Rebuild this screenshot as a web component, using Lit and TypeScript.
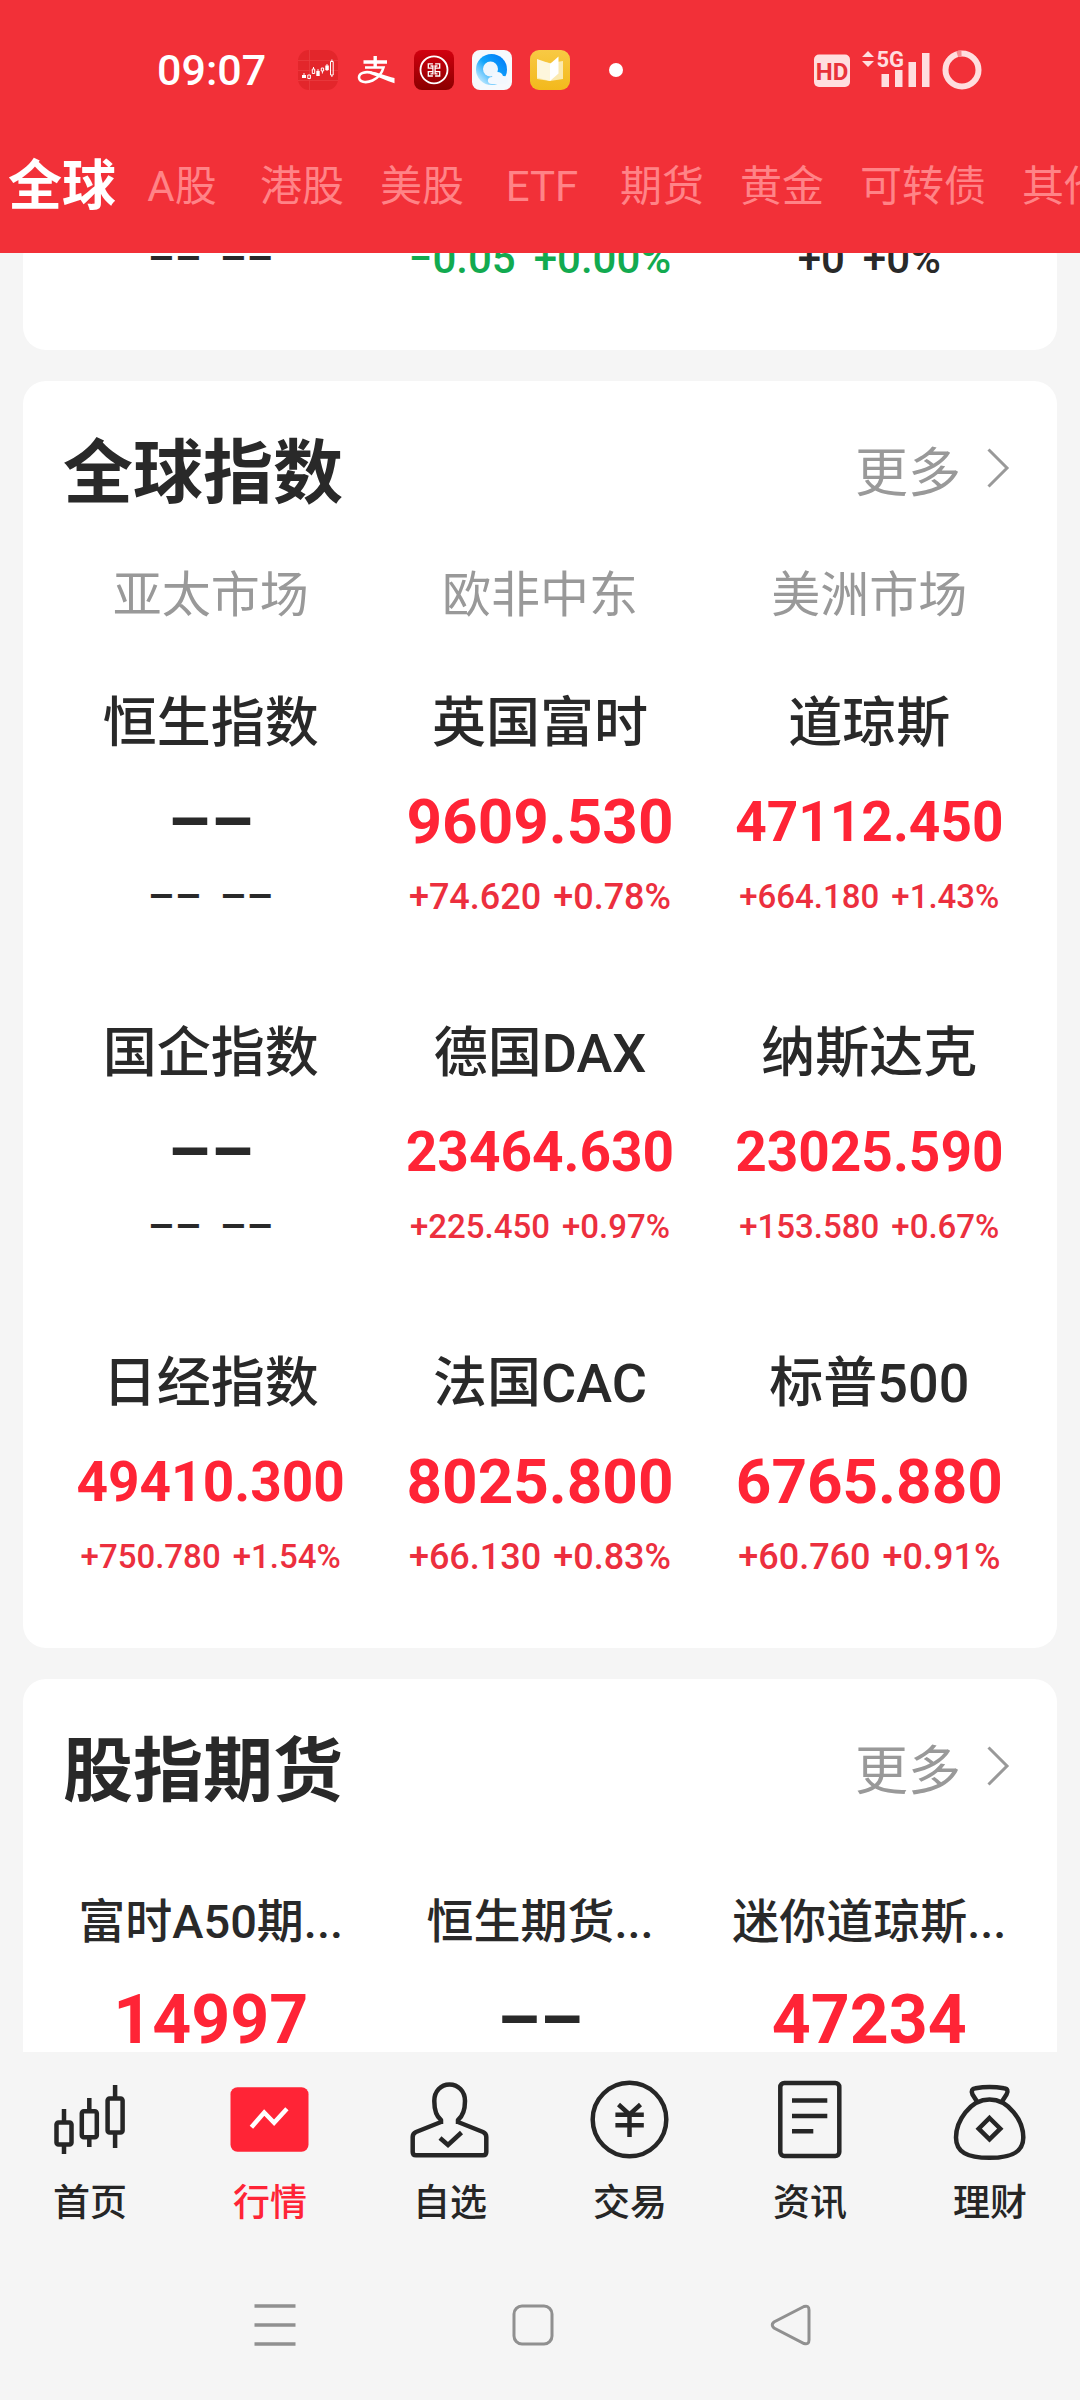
import { LitElement, html, css, svg, nothing } from "lit";
import { customElement, property, state } from "lit/decorators.js";
import { classMap } from "lit/directives/class-map.js";

interface Quote {
  name?: string;
  value?: string;
  change: string;
  tone: "up" | "down" | "flat";
}

const TABS = ["全球", "A股", "港股", "美股", "ETF", "期货", "黄金", "可转债", "其他"];

const MARKETS = ["亚太市场", "欧非中东", "美洲市场"];

const PREVIOUS: Quote[] = [
  { change: "–– ––", tone: "flat" },
  { change: "−0.05 +0.00%", tone: "down" },
  { change: "+0 +0%", tone: "flat" },
];

const INDICES: Quote[][] = [
  [
    { name: "恒生指数", value: "––", change: "–– ––", tone: "flat" },
    { name: "英国富时", value: "9609.530", change: "+74.620 +0.78%", tone: "up" },
    { name: "道琼斯", value: "47112.450", change: "+664.180 +1.43%", tone: "up" },
  ],
  [
    { name: "国企指数", value: "––", change: "–– ––", tone: "flat" },
    { name: "德国DAX", value: "23464.630", change: "+225.450 +0.97%", tone: "up" },
    { name: "纳斯达克", value: "23025.590", change: "+153.580 +0.67%", tone: "up" },
  ],
  [
    { name: "日经指数", value: "49410.300", change: "+750.780 +1.54%", tone: "up" },
    { name: "法国CAC", value: "8025.800", change: "+66.130 +0.83%", tone: "up" },
    { name: "标普500", value: "6765.880", change: "+60.760 +0.91%", tone: "up" },
  ],
];

const FUTURES: Quote[] = [
  { name: "富时A50期...", value: "14997", change: "", tone: "up" },
  { name: "恒生期货...", value: "––", change: "", tone: "flat" },
  { name: "迷你道琼斯...", value: "47234", change: "", tone: "up" },
];

const NAV_ICONS: Record<string, unknown> = {
  首页: svg`
    <g fill="none" stroke="currentColor" stroke-width="4.5">
      <rect x="6.5" y="43.5" width="15" height="22" rx="2"/>
      <path d="M14 30V43M14 66V75"/>
      <rect x="31.8" y="32.2" width="15" height="26" rx="2"/>
      <path d="M39.3 19V32M39.3 58V68"/>
      <rect x="57.6" y="19.5" width="15" height="34" rx="2"/>
      <path d="M65.1 6V19M65.1 54V69"/>
    </g>`,
  行情: svg`
    <rect x="0.5" y="8.3" width="78" height="64.4" rx="7" fill="currentColor"/>
    <path d="M21.4 48.3L34.2 33.5L44.1 43.8L56.9 29.7" fill="none" stroke="#fff" stroke-width="4.5"/>`,
  自选: svg`
    <g fill="none" stroke="currentColor" stroke-width="4.5" stroke-linejoin="round">
      <path d="M31 45V41C26 37 24.3 31 24.3 22C24.3 12 31 5.5 39.5 5.5C48 5.5 55 12 55 22C55 31 53 37 48 41V45"/>
      <path d="M31 43L6 53Q2.7 54.5 2.7 58V73Q2.7 76.3 6 76.3H73Q76.3 76.3 76.3 73V58Q76.3 54.5 73 53L48 43"/>
      <path d="M30 59L38 66L51.5 53.5" stroke-linejoin="miter"/>
    </g>`,
  交易: svg`
    <g fill="none" stroke="currentColor" stroke-width="4.5">
      <circle cx="39.5" cy="40.5" r="36.8"/>
      <path d="M28.5 25.5L39.5 35.5L50.5 25.5M25.4 35.7H53.8M25.4 46.2H53.8M39.5 35V58"/>
    </g>`,
  资讯: svg`
    <g fill="none" stroke="currentColor" stroke-width="4.5">
      <rect x="10.3" y="4" width="59" height="73" rx="4"/>
      <path d="M22 21.5H57.3M22 37H57.3M22 52.3H43.3"/>
    </g>`,
  理财: svg`
    <g fill="none" stroke="currentColor" stroke-width="4.5" stroke-linejoin="round">
      <path d="M39.5 20.5C20 20.5 6 42 6 58.5C6 73 17 78.8 39.5 78.8C62 78.8 73.3 73 73.3 58.5C73.3 42 59 20.5 39.5 20.5Z"/>
      <path d="M27 22.5L22.5 15.5C21 11.5 22 9.8 25.5 9.3Q39.5 6.8 54 9.3C57.5 9.8 58.5 11.5 56.5 15.5L52 22.5"/>
      <path d="M39.5 39L50.3 49.7L39.5 60.4L28.7 49.7Z" stroke-linejoin="miter"/>
    </g>`,
};

const FONT = css`"Roboto", "Noto Sans CJK SC", sans-serif`;

@customElement("quote-cell")
export class QuoteCell extends LitElement {
  @property({ attribute: false }) quote!: Quote;
  @property({ type: Boolean }) compact = false;

  static styles = css`
    :host {
      display: block;
      font-family: ${FONT};
      text-align: center;
      white-space: nowrap;
      color: #292929;
    }
    .name {
      font-size: 54px;
      font-weight: 500;
      line-height: 96px;
    }
    .name.compact {
      font-size: 47px;
    }
    .value {
      font-size: 62px;
      font-weight: 700;
      line-height: 100px;
    }
    .value.short {
      font-size: 68px;
    }
    .value.long {
      font-size: 55px;
    }
    .change {
      display: flex;
      justify-content: center;
      gap: 12px;
      font-size: 36px;
      font-weight: 500;
      line-height: 50px;
    }
    .change.short {
      gap: 18px;
      font-size: 42px;
    }
    .change.long {
      font-size: 33px;
    }
    .up {
      color: #ff2436;
    }
    .change.up {
      color: #ec2f3e;
    }
    .down {
      color: #12aa50;
    }
  `;

  render() {
    const { name, value, change, tone } = this.quote;
    return html`
      ${name ? html`<div class=${classMap({ name: true, compact: this.compact })}>${name}</div>` : nothing}
      ${value
        ? html`<div class=${classMap({ value: true, [tone]: true, short: value.length < 7, long: value.length > 8 })}>${value}</div>`
        : nothing}
      ${change
        ? html`<div class=${classMap({ change: true, [tone]: true, short: change.length < 13, long: change.length > 14 })}>
            ${change.split(" ").map((part) => html`<span>${part}</span> `)}
          </div>`
        : nothing}
    `;
  }
}

@customElement("status-bar")
export class StatusBar extends LitElement {
  static styles = css`
    :host {
      display: flex;
      align-items: center;
      height: 140px;
      padding: 0 98px 0 157px;
      font-family: ${FONT};
      color: #fff;
    }
    .time {
      font-size: 43px;
      font-weight: 500;
      line-height: 50px;
      margin-right: 32px;
    }
    .apps {
      display: flex;
      align-items: center;
      gap: 18px;
    }
    .dot {
      width: 14px;
      height: 14px;
      border-radius: 50%;
      background: #fff;
      margin-left: 39px;
    }
    .signals {
      display: flex;
      align-items: center;
      gap: 12px;
      margin-left: auto;
    }
    svg {
      display: block;
      overflow: visible;
    }
    text {
      font-family: "Roboto", sans-serif;
      font-weight: 700;
    }
  `;

  render() {
    return html`
      <span class="time">09:07</span>
      <div class="apps">
        <svg width="40" height="40" viewBox="0 0 40 40" aria-hidden="true">
          <rect width="40" height="40" rx="11" fill="#e3262b"/>
          <path d="M0 10.5H40M0 20.5H40M0 30.5H40M11.5 0V40" stroke="#ea3c40" stroke-width="0.8"/>
          <path d="M4 25H8V28H4ZM18.3 21H21.7V26H18.3ZM27.3 15.5H30.8V20H27.3Z" fill="#fff"/>
          <path d="M6 23V28M20 19V26M29 14V21" stroke="#fff" stroke-width="0.9"/>
          <path d="M9.8 25H12.4V28.5H9.8ZM14.3 19H16.7V23.5H14.3ZM23.3 18H25.6V21H23.3ZM32.5 11.5H35.2V25H32.5ZM33.9 9.5V11.5M33.9 25V27M15.5 17V19M24.4 21V23.5" fill="none" stroke="#fff" stroke-width="1"/>
        </svg>
        <svg width="40" height="40" viewBox="0 0 40 40" aria-hidden="true">
          <g fill="none" stroke="#fff">
            <path d="M7.5 12H31M19.2 6V17" stroke-width="3.4"/>
            <path d="M9 17.5H27.5C26 23 22 28 16.500 30.5C9.5 33.5 3 32 3 27.3C3 22.5 10 21.2 16 22.8" stroke-width="2.6"/>
          </g>
          <path d="M14 21.2C21 22 30 26 38.5 28V33.3C31 31 22 26.5 14 24Z" fill="#fff"/>
        </svg>
        <svg width="40" height="40" viewBox="0 0 40 40" aria-hidden="true">
          <defs>
            <linearGradient id="bank" x1="0" y1="0" x2="0" y2="1">
              <stop offset="0" stop-color="#d2000f"/>
              <stop offset="1" stop-color="#8a0000"/>
            </linearGradient>
          </defs>
          <rect width="40" height="40" rx="8" fill="url(#bank)"/>
          <circle cx="20" cy="19.8" r="13.5" fill="none" stroke="#fff" stroke-width="1.8"/>
          <path d="M18.9 13.9H14.3V18.2H18.9V21.7H14.3V26H18.9M21.1 13.9H25.7V18.2H21.1V21.7H25.7V26H21.1M16.5 16H18.9V18.2M23.500 16H21.1V18.2M16.5 23.8H18.9V21.7M23.5 23.8H21.1V21.7" fill="none" stroke="#fff" stroke-width="1.3"/>
        </svg>
        <svg width="40" height="40" viewBox="0 0 40 40" aria-hidden="true">
          <defs>
            <linearGradient id="ring" x1="1" y1="0.2" x2="0.2" y2="1">
              <stop offset="0" stop-color="#007cf8"/>
              <stop offset="0.5" stop-color="#12a5fb"/>
              <stop offset="1" stop-color="#c9ecff"/>
            </linearGradient>
          </defs>
          <rect width="40" height="40" rx="8" fill="#f6f9fd"/>
          <circle cx="19.5" cy="19.5" r="15.5" fill="url(#ring)"/>
          <circle cx="18.5" cy="19" r="7.5" fill="#eef6fd"/>
          <path d="M20 34C14.5 34 14.5 27 20 27C21 20.5 29.5 20.5 31 26C37 25.5 38 34 32.5 34Z" fill="#f3f8fe"/>
        </svg>
        <svg width="40" height="40" viewBox="0 0 40 40" aria-hidden="true">
          <defs>
            <linearGradient id="book" x1="0" y1="0" x2="0" y2="1">
              <stop offset="0" stop-color="#f8c944"/>
              <stop offset="1" stop-color="#f3b91c"/>
            </linearGradient>
          </defs>
          <rect width="40" height="40" rx="9" fill="url(#book)"/>
          <path d="M7 11L20 13L33 11V29L20 31L7 29Z" fill="#fbe9b0"/>
          <path d="M7 9L20 13.5V31L7 27.5Z" fill="#fdf6dc"/>
          <path d="M20 14L28.5 6.5V23.5L20 31Z" fill="#fff"/>
        </svg>
      </div>
      <span class="dot"></span>
      <div class="signals">
        <svg width="36" height="40" viewBox="0 0 36 40" role="img" aria-label="HD">
          <rect y="4.5" width="36" height="32.5" rx="5" fill="#ffdedf"/>
          <text x="18" y="29.5" font-size="24" text-anchor="middle" fill="#e8323a">HD</text>
        </svg>
        <svg width="68" height="40" viewBox="0 0 68 40" role="img" aria-label="5G">
          <path d="M0 7L6 1L12 7ZM0 11H12L6 17Z" fill="#ffdedf"/>
          <text x="14.5" y="17" font-size="22" fill="#ffdedf">5G</text>
          <path d="M19.5 24H27V37H19.5ZM33 20H40.5V37H33ZM46.5 12H54V37H46.5ZM60 3H67.5V37H60Z" fill="#ffdedf"/>
        </svg>
        <svg width="40" height="40" viewBox="0 0 40 40" role="img" aria-label="电量">
          <circle cx="20" cy="20" r="16.5" fill="none" stroke="#ffdedf" stroke-width="6"/>
          <path d="M15.2 4.2A16.5 16.5 0 0 1 19.5 3.5" fill="none" stroke="#f78c90" stroke-width="6"/>
        </svg>
      </div>
    `;
  }
}

@customElement("app-root")
export class AppRoot extends LitElement {
  @state() private tab = "全球";
  @state() private section = "行情";

  static styles = css`
    :host {
      display: flex;
      flex-direction: column;
      height: 100vh;
      overflow: hidden;
      background: #f5f5f5;
      font-family: ${FONT};
      color: #292929;
    }
    button {
      border: 0;
      padding: 0;
      background: none;
      color: inherit;
      font: inherit;
      cursor: pointer;
    }
    .top {
      flex: none;
      background: #f23038;
    }
    .tabs {
      display: flex;
      align-items: center;
      gap: 36px;
      height: 93px;
      padding: 0 0 20px 20px;
      overflow: hidden;
    }
    .tab {
      flex: none;
      display: flex;
      justify-content: center;
      min-width: 84px;
      font-size: 42px;
      line-height: 60px;
      white-space: nowrap;
      color: #ff8387;
    }
    .tab.active {
      width: 84px;
      font-size: 54px;
      font-weight: 700;
      color: #fff;
    }
    main {
      flex: 1;
      min-height: 0;
      overflow: hidden;
      padding: 0 23px;
    }
    .card {
      background: #fff;
      border-radius: 23px;
      padding: 43px 23px 66px;
      margin-bottom: 31px;
    }
    .card.scrolled {
      margin-top: -19px;
      padding-top: 0;
    }
    .head {
      display: flex;
      align-items: center;
      justify-content: space-between;
      padding: 0 25px 0 17px;
    }
    h2 {
      margin: 0;
      font-size: 70px;
      font-weight: 700;
      line-height: 100px;
    }
    .more {
      display: flex;
      align-items: center;
      gap: 26px;
      font-size: 53px;
      line-height: 80px;
      color: #999;
      text-decoration: none;
    }
    .more svg {
      margin-bottom: 12px;
    }
    .row {
      display: grid;
      grid-template-columns: repeat(3, minmax(0, 1fr));
    }
    .futures {
      margin-top: 52px;
    }
    table {
      width: 100%;
      table-layout: fixed;
      border-collapse: collapse;
      margin-top: 42px;
    }
    th {
      padding: 0 0 50px;
      font-size: 49px;
      font-weight: 400;
      line-height: 60px;
      color: #999;
    }
    td {
      padding: 0 0 84px;
    }
    tr:last-child td {
      padding-bottom: 0;
    }
    .bottom {
      flex: none;
      background: #f5f5f5;
    }
    .nav {
      display: grid;
      grid-template-columns: repeat(6, minmax(0, 1fr));
      padding: 27px 0 47px;
    }
    .item {
      display: flex;
      flex-direction: column;
      align-items: center;
      gap: 20px;
      font-size: 37px;
      font-weight: 500;
      line-height: 50px;
      color: #262626;
    }
    .item.active {
      color: #ff2436;
    }
    .system {
      display: flex;
      justify-content: center;
      gap: 216px;
      padding: 28px 14px 54px 0;
    }
    svg {
      display: block;
      overflow: visible;
    }
  `;

  private heading(title: string) {
    return html`
      <div class="head">
        <h2>${title}</h2>
        <a class="more" href="#more">
          更多
          <svg width="22" height="40" viewBox="0 0 22 40" aria-hidden="true">
            <path d="M1.5 1.5L20 20L1.5 38.5" fill="none" stroke="#999" stroke-width="3"/>
          </svg>
        </a>
      </div>
    `;
  }

  render() {
    return html`
      <header class="top">
        <status-bar></status-bar>
        <nav class="tabs">
          ${TABS.map(
            (t) => html`<button class=${classMap({ tab: true, active: t === this.tab })} @click=${() => (this.tab = t)}>${t}</button>`
          )}
        </nav>
      </header>
      <main>
        <section class="card scrolled">
          <div class="row">${PREVIOUS.map((q) => html`<quote-cell .quote=${q}></quote-cell>`)}</div>
        </section>
        <section class="card">
          ${this.heading("全球指数")}
          <table>
            <thead>
              <tr>${MARKETS.map((m) => html`<th scope="col">${m}</th>`)}</tr>
            </thead>
            <tbody>
              ${INDICES.map(
                (row) => html`<tr>${row.map((q) => html`<td><quote-cell .quote=${q}></quote-cell></td>`)}</tr>`
              )}
            </tbody>
          </table>
        </section>
        <section class="card">
          ${this.heading("股指期货")}
          <div class="row futures">
            ${FUTURES.map((q) => html`<quote-cell .quote=${q} compact></quote-cell>`)}
          </div>
        </section>
      </main>
      <footer class="bottom">
        <nav class="nav">
          ${Object.entries(NAV_ICONS).map(
            ([label, icon]) => html`
              <button class=${classMap({ item: true, active: label === this.section })} @click=${() => (this.section = label)}>
                <svg width="80" height="80" viewBox="0 0 80 80" aria-hidden="true">${icon}</svg>
                <span>${label}</span>
              </button>
            `
          )}
        </nav>
        <div class="system">
          <button aria-label="最近任务">
            <svg width="42" height="42" viewBox="0 0 42 42">
              <path d="M0.5 2H41.5M0.5 21H41.5M0.5 40H41.5" stroke="#909090" stroke-width="3.5"/>
            </svg>
          </button>
          <button aria-label="主屏幕">
            <svg width="42" height="42" viewBox="0 0 42 42">
              <rect x="2" y="2" width="38" height="38" rx="8" fill="none" stroke="#909090" stroke-width="3"/>
            </svg>
          </button>
          <button aria-label="返回">
            <svg width="42" height="42" viewBox="0 0 42 42">
              <path d="M34 2.5L4 18Q0.5 21 4 24L34 39.5Q39 41 39 36V6Q39 1 34 2.5Z" fill="none" stroke="#909090" stroke-width="3"/>
            </svg>
          </button>
        </div>
      </footer>
    `;
  }
}
